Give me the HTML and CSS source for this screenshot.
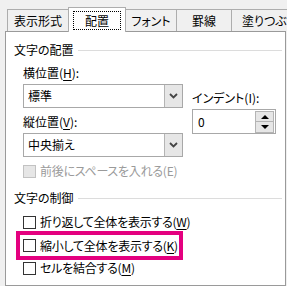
FILE: index.html
```html
<!DOCTYPE html>
<html lang="ja">
<head>
<meta charset="utf-8">
<link rel="stylesheet" href="styles.css">
</head>
<body>
<div class="dialog">
  <div class="tabs">
    <div class="tab w1">表示形式</div>
    <div class="tab active"><span class="focus">配置</span></div>
    <div class="tab w3">フォント</div>
    <div class="tab w4">罫線</div>
    <div class="tab w5">塗りつぶし</div>
  </div>
  <div class="panel">
    <div class="heading"><span>文字の配置</span><span class="rule"></span></div>
    <div class="group1">
      <div class="col">
        <div class="label">横位置(<u>H</u>):</div>
        <div class="combo">
          <span class="combo-text">標準</span>
          <span class="combo-btn"><svg width="9" height="6" viewBox="0 0 9 6"><polyline points="1,1 4.5,4.5 8,1" fill="none" stroke="#444" stroke-width="1.8"/></svg></span>
        </div>
        <div class="label gap6">縦位置(<u>V</u>):</div>
        <div class="combo">
          <span class="combo-text">中央揃え</span>
          <span class="combo-btn"><svg width="9" height="6" viewBox="0 0 9 6"><polyline points="1,1 4.5,4.5 8,1" fill="none" stroke="#444" stroke-width="1.8"/></svg></span>
        </div>
        <div class="check-row gap6 disabled"><span class="box"></span><span>前後にスペースを入れる(E)</span></div>
      </div>
      <div class="col">
        <div class="label indent-label">インデント(I):</div>
        <div class="spin">
          <span class="spin-val">0</span>
          <span class="spin-btns">
            <span class="spin-btn"><span class="tri-up"></span></span>
            <span class="spin-btn"><span class="tri-down"></span></span>
          </span>
        </div>
      </div>
    </div>
    <div class="heading h2"><span>文字の制御</span><span class="rule"></span></div>
    <div class="group2">
      <div class="check-row first"><span class="box"></span><span>折り返して全体を表示する(<u>W</u>)</span></div>
      <div class="highlight">
        <div class="check-row"><span class="box"></span><span>縮小して全体を表示する(<u>K</u>)</span></div>
      </div>
      <div class="check-row"><span class="box"></span><span>セルを結合する(<u>M</u>)</span></div>
    </div>
  </div>
</div>
</body>
</html>
```
FILE: styles.css
```css
html, body {
  margin: 0;
  padding: 0;
  background: #f0f0f0;
}
body {
  font-family: "Noto Sans CJK JP", sans-serif;
  font-size: 12px;
  line-height: 16px;
  color: #000;
  font-feature-settings: "palt";
}
.dialog {
  width: 287px;
  height: 286px;
  overflow: hidden;
}
.tabs {
  display: flex;
  align-items: flex-end;
  height: 31px;
  padding-left: 7px;
  white-space: nowrap;
}
.tab {
  box-sizing: border-box;
  height: 22px;
  border: 1px solid #adadad;
  border-bottom: none;
  border-left: none;
  background: #f0f0f0;
  display: flex;
  align-items: center;
  justify-content: center;
  flex-shrink: 0;
}
.tab.w1 { width: 62px; border-left: 1px solid #adadad; }
.tab.active {
  width: 58px;
  height: 25px;
  margin-bottom: -1px;
  background: #fff;
  position: relative;
  z-index: 1;
  border-left: 1px solid #adadad;
  margin-left: -1px;
  align-items: flex-start;
  padding-top: 3px;
}
.focus {
  display: block;
  box-sizing: border-box;
  width: 48px;
  height: 19px;
  border: 1px dotted #000;
  text-align: center;
  line-height: 17px;
}
.tab.w3 { width: 51px; }
.tab.w4 { width: 55px; }
.tab.w5 { width: 80px; justify-content: flex-start; padding-left: 10px; }
.panel {
  box-sizing: border-box;
  margin-left: 5px;
  width: 281px;
  height: 255px;
  border: 1px solid #9a9a9a;
  background: #fff;
  padding: 10px 3px 0 8px;
}
.heading {
  display: flex;
  align-items: center;
  height: 16px;
}
.rule {
  flex: 1;
  height: 1px;
  background: #dcdcdc;
  margin-left: 4px;
}
.group1 {
  display: grid;
  grid-template-columns: 160px 84px;
  column-gap: 9px;
  margin: 7px 0 0 9px;
}
.col {
  display: flex;
  flex-direction: column;
}
.label {
  height: 16px;
  white-space: nowrap;
}
.gap6 { margin-top: 6px; }
.combo {
  box-sizing: border-box;
  margin-top: 3px;
  height: 24px;
  border: 1px solid #a8a8a8;
  display: flex;
  align-items: stretch;
}
.combo-text {
  flex: 1;
  padding-left: 4px;
  display: flex;
  align-items: center;
}
.combo-btn {
  width: 17px;
  background: #e6e6e6;
  border-left: 1px solid #b4b4b4;
  display: flex;
  align-items: center;
  justify-content: center;
}
.check-row {
  display: flex;
  align-items: center;
  height: 16px;
  white-space: nowrap;
  letter-spacing: -0.25px;
}
.box {
  box-sizing: border-box;
  width: 13px;
  height: 13px;
  border: 1px solid #333;
  background: #fff;
  margin-right: 4px;
  flex-shrink: 0;
}
.disabled { color: #9a9a9a; }
.disabled .box {
  background: #e6e6e6;
  border-color: #c2c2c2;
}
.indent-label { margin-top: 25px; }
.spin {
  box-sizing: border-box;
  margin-top: 3px;
  height: 25px;
  border: 1px solid #a8a8a8;
  display: flex;
}
.spin-val {
  flex: 1;
  padding-left: 5px;
  display: flex;
  align-items: center;
}
.spin-btns {
  display: flex;
  flex-direction: column;
  width: 19px;
  margin: 1px 1px 0 0;
}
.spin-btn {
  box-sizing: border-box;
  height: 11.5px;
  background: #e6e6e6;
  border: 1px solid #b4b4b4;
  display: flex;
  align-items: center;
  justify-content: center;
}
.spin-btn + .spin-btn { border-top: none; }
.tri-up {
  width: 0;
  height: 0;
  border-left: 4px solid transparent;
  border-right: 4px solid transparent;
  border-bottom: 4px solid #000;
}
.tri-down {
  width: 0;
  height: 0;
  border-left: 4px solid transparent;
  border-right: 4px solid transparent;
  border-top: 4px solid #000;
}
.h2 { margin-top: 11px; }
.group2 {
  margin-left: 9px;
  display: flex;
  flex-direction: column;
}
.check-row.first { margin-top: 8px; }
.highlight {
  box-sizing: border-box;
  margin-top: 1px;
  margin-left: -7px;
  width: 167px;
  height: 29px;
  border: 4px solid #e4007f;
  padding-left: 3px;
  display: flex;
  align-items: center;
}
u { text-decoration-thickness: 1px; text-underline-offset: 2px; }
```
